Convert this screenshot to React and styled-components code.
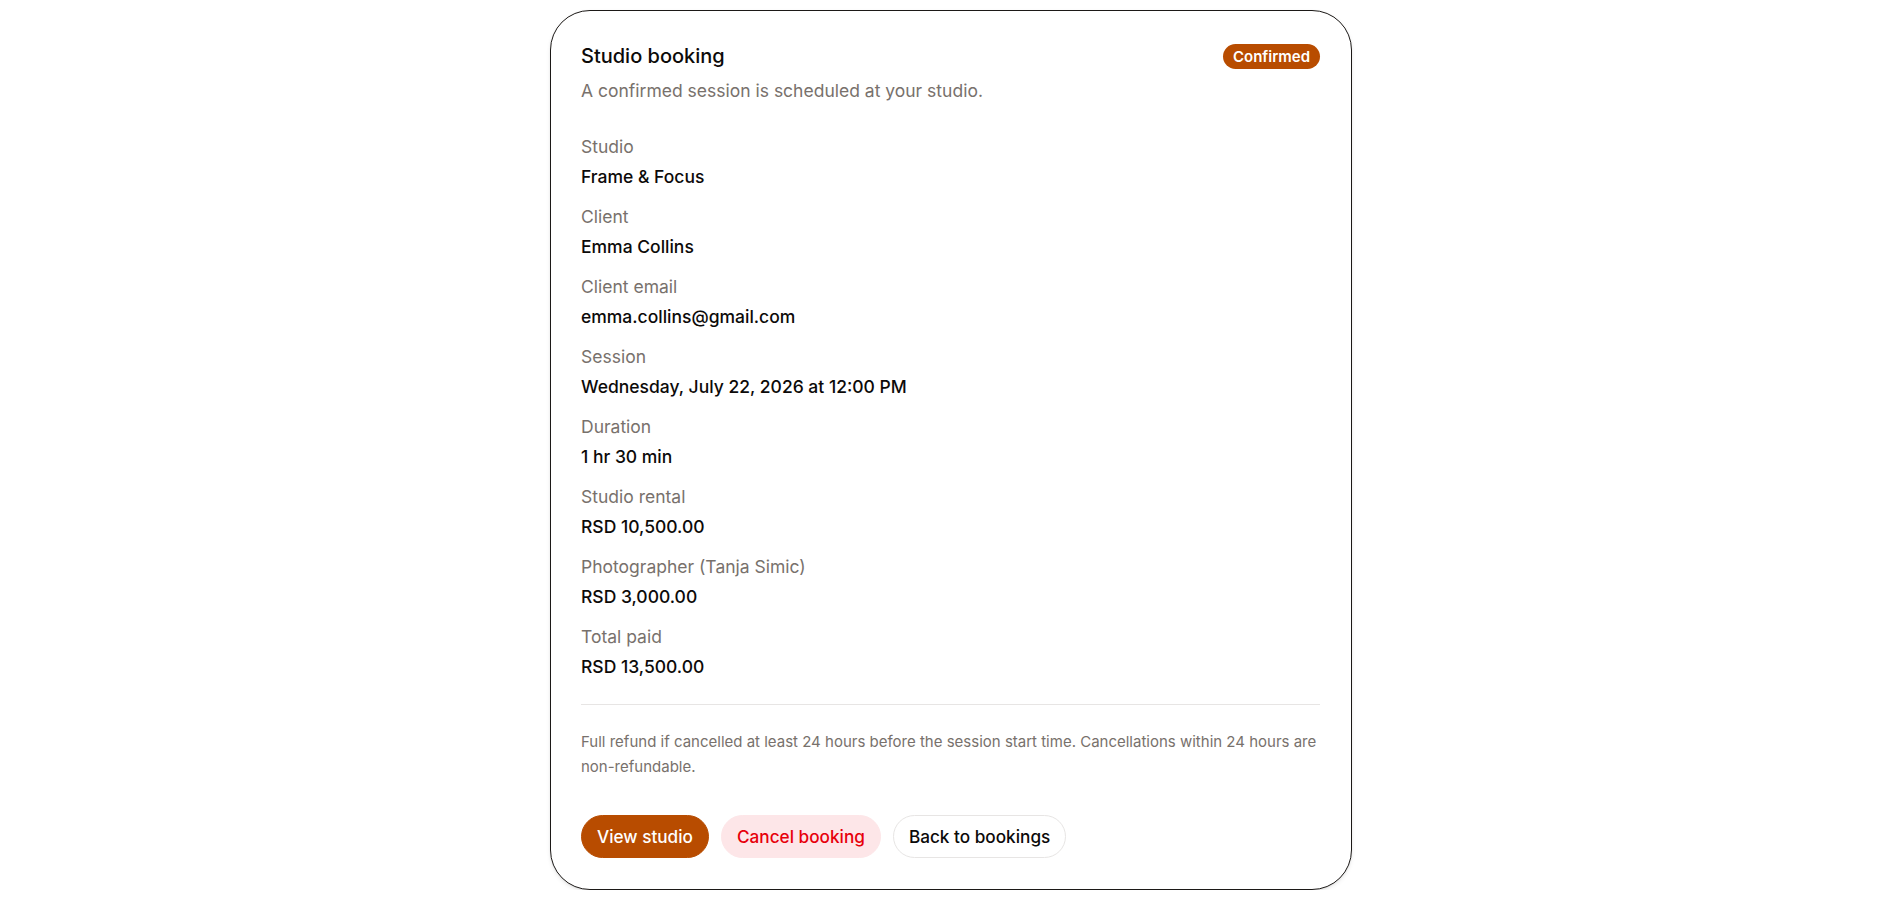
import React from "react";
import styled, { createGlobalStyle } from "styled-components";

const Global = createGlobalStyle`
  * { box-sizing: border-box; }
  html, body { margin: 0; padding: 0; background: #ffffff; }
  body { font-family: Inter, "Noto Sans", sans-serif; color: #0c0a09; }
`;

const Page = styled.main`
  display: flex;
  justify-content: center;
  padding: 10px 0 0 5px;
`;

const Card = styled.section`
  width: 802px;
  border: 1px solid #1c1917;
  border-radius: 40px;
  padding: 31px 31px 31px 30px;
  background: #fff;
  box-shadow: 0 2px 4px rgba(0, 0, 0, 0.08), 0 1px 2px rgba(0, 0, 0, 0.06);
  display: flex;
  flex-direction: column;
`;

const Header = styled.header`
  display: flex;
  flex-direction: column;
  gap: 9px;
  margin-bottom: 32px;
`;

const TitleRow = styled.div`
  display: flex;
  align-items: center;
  justify-content: space-between;
`;

const Title = styled.h1`
  margin: 0;
  font-size: 20px;
  line-height: 28px;
  font-weight: 500;
  color: #0c0a09;
`;

const Badge = styled.span`
  display: inline-flex;
  align-items: center;
  height: 25px;
  padding: 0 10px;
  border-radius: 999px;
  background: #b84c00;
  color: #fff;
  font-size: 15px;
  font-weight: 600;
`;

const Subtitle = styled.p`
  margin: 0;
  font-size: 17.5px;
  line-height: 24px;
  color: #78716c;
`;

const DetailList = styled.dl`
  margin: 0;
  display: flex;
  flex-direction: column;
  gap: 16px;
`;

const Detail = styled.div`
  display: flex;
  flex-direction: column;
  gap: 6px;
`;

const Label = styled.dt`
  font-size: 17.5px;
  line-height: 24px;
  color: #78716c;
`;

const Value = styled.dd`
  margin: 0;
  font-size: 17.5px;
  line-height: 24px;
  font-weight: 500;
  color: #0c0a09;
`;

const Policy = styled.p`
  margin: 25px 0 0;
  padding-top: 24px;
  border-top: 1px solid #e7e5e4;
  font-size: 15px;
  line-height: 25px;
  color: #78716c;
`;

const Actions = styled.div`
  display: flex;
  gap: 12px;
  margin-top: 36px;
`;

const variants = {
  primary: "background: #b84c00; color: #fff; border-color: #b84c00;",
  danger: "background: #fde6e8; color: #e7000b; border-color: #fde6e8;",
  outline: "background: #fff; color: #0c0a09; border-color: #e7e5e4;",
};

const Button = styled.button`
  height: 43px;
  padding: 0 15px;
  border-radius: 999px;
  border: 1px solid transparent;
  font-family: Inter, "Noto Sans", sans-serif;
  font-size: 17.2px;
  font-weight: 500;
  cursor: pointer;
  ${(p) => variants[p.$variant]}
`;

const details = [
  ["Studio", "Frame & Focus"],
  ["Client", "Emma Collins"],
  ["Client email", "emma.collins@gmail.com"],
  ["Session", "Wednesday, July 22, 2026 at 12:00 PM"],
  ["Duration", "1 hr 30 min"],
  ["Studio rental", "RSD 10,500.00"],
  ["Photographer (Tanja Simic)", "RSD 3,000.00"],
  ["Total paid", "RSD 13,500.00"],
];

export default function App() {
  return (
    <>
      <Global />
      <Page>
        <Card>
          <Header>
            <TitleRow>
              <Title>Studio booking</Title>
              <Badge>Confirmed</Badge>
            </TitleRow>
            <Subtitle>A confirmed session is scheduled at your studio.</Subtitle>
          </Header>
          <DetailList>
            {details.map(([l, v]) => (
              <Detail key={l}>
                <Label>{l}</Label>
                <Value>{v}</Value>
              </Detail>
            ))}
          </DetailList>
          <Policy>
            Full refund if cancelled at least 24 hours before the session start time. Cancellations within 24 hours are non-refundable.
          </Policy>
          <Actions>
            <Button $variant="primary">View studio</Button>
            <Button $variant="danger">Cancel booking</Button>
            <Button $variant="outline">Back to bookings</Button>
          </Actions>
        </Card>
      </Page>
    </>
  );
}
